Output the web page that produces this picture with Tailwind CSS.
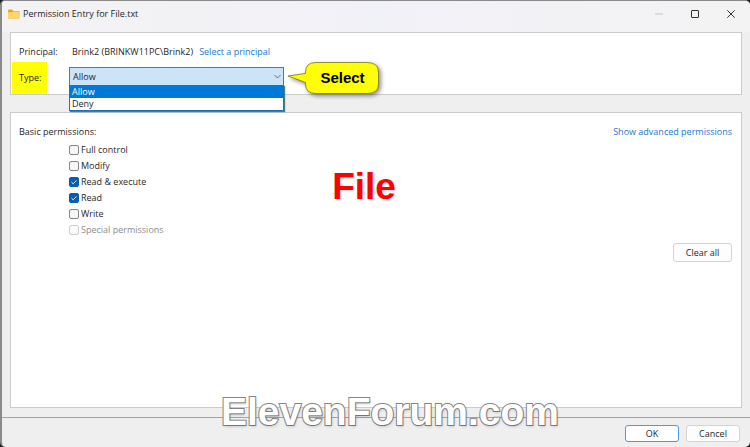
<!DOCTYPE html>
<html lang="en">
<head>
  <meta charset="UTF-8" />
  <meta name="viewport" content="width=device-width, initial-scale=1.0"/>
  <title>Permission Entry for File.txt</title>
  <script src="https://cdn.jsdelivr.net/npm/@tailwindcss/browser@4"></script>
</head>
<body class="bg-[#1c1c1c] h-screen overflow-hidden font-['Open_Sans','Noto_Sans',sans-serif] text-[9px] leading-3 text-[#1f1f1f]">

  <!-- Dialog window -->
  <div class="relative flex flex-col h-full bg-[#efefef] border-t border-l-2 border-[#8a8a8a] rounded-[5px] overflow-hidden">

    <!-- Title bar -->
    <header class="flex items-center h-[31px] pl-[6px] pr-px pb-[6px] shrink-0 bg-linear-to-r from-[#f3f3f3] via-[#f1f1f8] to-[#f3f3f3]">
      <svg class="w-3 h-3 mr-[3px]" viewBox="0 0 12 12">
        <path d="M0 2.5Q0 1.5 1 1.5H4L5.5 3H11Q12 3 12 4V9.500Q12 10.500 11 10.500H1Q0 10.500 0 9.500Z" fill="#e9a825"/>
        <path d="M0 5Q0 4.200 1 4.200H4.500L5.700 3.400H11Q12 3.400 12 4.400V9.500Q12 10.500 11 10.500H1Q0 10.500 0 9.500Z" fill="#fdd56b"/>
      </svg>
      <h1 class="flex-1">Permission Entry for File.txt</h1>
      <div class="flex">
        <button type="button" aria-label="Minimize" class="w-9 flex justify-center" disabled>
          <svg class="w-2 h-2" viewBox="0 0 8 8"><path d="M0 4H8" stroke="#c4c4c4" fill="none"/></svg>
        </button>
        <button type="button" aria-label="Maximize" class="w-9 flex justify-center">
          <svg class="w-2 h-2" viewBox="0 0 8 8"><rect x="0.500" y="0.500" width="7" height="7" rx="0.500" stroke="#333" fill="none"/></svg>
        </button>
        <button type="button" aria-label="Close" class="w-9 flex justify-center">
          <svg class="w-2 h-2" viewBox="0 0 8 8"><path d="M0.300 0.300L7.700 7.700M7.700 0.300L0.300 7.700" stroke="#333" fill="none"/></svg>
        </button>
      </div>
    </header>

    <main class="flex-1 flex flex-col gap-[17px] px-2 pb-[9px]">
      <!-- Principal and type -->
      <section class="bg-white border border-[#cbcbcb] pt-[13px]">
        <div class="flex pl-2 mb-1">
          <span class="w-[53px]">Principal:</span>
          <span class="mr-[6px]">Brink2 (BRINKW11PC\Brink2)</span>
          <a href="#" class="text-[#2277d4]">Select a principal</a>
        </div>
        <div class="flex pl-px">
          <label for="type" class="w-[35px] h-8 pl-[7px] flex items-center bg-[#ffff00]">Type:</label>
          <div class="relative ml-[22px] mt-[5px] w-[215px]">
            <select id="type" class="block w-full h-[19px] pl-[3px] appearance-none bg-[#cce4f7] border border-[#3c7fb8] outline-none">
              <option>Allow</option>
              <option>Deny</option>
            </select>
            <svg class="absolute right-[3px] top-[6px] w-[7px] h-[7px] pointer-events-none" viewBox="0 0 7 7"><path d="M0.500 2L3.500 5L6.500 2" stroke="#555" stroke-width="0.800" fill="none"/></svg>
            <ul role="listbox" class="absolute z-10 top-[18px] left-0 w-full bg-white border border-[#1b73bd] shadow-[1px_1px_1px_#4e7892]">
              <li role="option" aria-selected="true" class="px-0.5 bg-[#0078d7] text-white">Allow</li>
              <li role="option" aria-selected="false" class="px-0.5">Deny</li>
            </ul>
            <!-- Callout -->
            <div class="absolute left-[218px] -top-[6px] w-[94px] h-[34px] flex items-center justify-center pl-[17px] font-['Liberation_Sans',Arial,sans-serif] font-bold text-[15px] text-black">
              <svg class="absolute inset-0 w-full h-full overflow-visible drop-shadow-[2px_2px_2px_rgba(0,0,0,0.45)]" viewBox="0 0 94 34">
                <path d="M29 1.500H80Q91.500 1.500 91.500 11V23Q91.500 32.500 80 32.500H29Q18.500 32.500 18.500 23V21.500L1 15L18.500 12.500V11Q18.500 1.500 29 1.500Z" fill="#ffff00" stroke="#77771c" stroke-width="0.800"/>
              </svg>
              <span class="relative">Select</span>
            </div>
          </div>
        </div>
      </section>

      <!-- Basic permissions -->
      <section class="relative flex-1 bg-white border border-[#cbcbcb] pt-[13px] pl-2 pr-[9px]">
        <div class="flex justify-between">
          <h2>Basic permissions:</h2>
          <a href="#" class="text-[#2277d4]">Show advanced permissions</a>
        </div>
        <div class="flex flex-col gap-1 pl-[50px] pt-[6px]">
          <label class="flex items-center gap-[2px]"><input type="checkbox" class="appearance-none w-[10px] h-[10px] rounded-[2px] border border-[#858585] bg-[#f7f7f7]" /> Full control</label>
          <label class="flex items-center gap-[2px]"><input type="checkbox" class="appearance-none w-[10px] h-[10px] rounded-[2px] border border-[#858585] bg-[#f7f7f7]" /> Modify</label>
          <label class="relative flex items-center gap-[2px]">
            <input type="checkbox" checked class="appearance-none w-[10px] h-[10px] rounded-[2px] border border-[#858585] checked:bg-[#005fb8] checked:border-[#005fb8]" />
            <svg class="absolute left-0 w-[10px] h-[10px] pointer-events-none" viewBox="0 0 10 10"><path d="M2.500 5.200L4.200 6.800L7.500 3.500" stroke="#fff" stroke-width="0.900" fill="none"/></svg>
            Read &amp; execute
          </label>
          <label class="relative flex items-center gap-[2px]">
            <input type="checkbox" checked class="appearance-none w-[10px] h-[10px] rounded-[2px] border border-[#858585] checked:bg-[#005fb8] checked:border-[#005fb8]" />
            <svg class="absolute left-0 w-[10px] h-[10px] pointer-events-none" viewBox="0 0 10 10"><path d="M2.500 5.200L4.200 6.800L7.500 3.500" stroke="#fff" stroke-width="0.900" fill="none"/></svg>
            Read
          </label>
          <label class="flex items-center gap-[2px]"><input type="checkbox" class="appearance-none w-[10px] h-[10px] rounded-[2px] border border-[#858585] bg-[#f7f7f7]" /> Write</label>
          <label class="flex items-center gap-[2px] text-[#8d8d8d]"><input type="checkbox" disabled class="appearance-none w-[10px] h-[10px] rounded-[2px] border border-[#cfcfcf] bg-[#fbfbfb]" /> Special permissions</label>
        </div>
        <div class="flex justify-end pt-[7px]">
          <button type="button" class="w-[59px] h-[19px] bg-[#fdfdfd] border border-[#d3d3d3] rounded-[3px]">Clear all</button>
        </div>
        <p class="absolute top-[53px] inset-x-0 pr-6 text-center font-['Liberation_Sans',Arial,sans-serif] font-bold text-[37px] leading-[42px] text-[#ff0000] [text-shadow:1px_1px_3px_rgba(0,0,0,0.15)]">File</p>
      </section>
    </main>

    <!-- Footer -->
    <footer class="flex justify-end gap-[7px] h-[30px] pt-[7px] pr-[10px] border-t border-[#a3a3a3]">
      <button type="button" class="w-[54px] h-[17px] bg-white border border-[#4c9be0] rounded-[3px]">OK</button>
      <button type="button" class="w-[54px] h-[17px] bg-[#fdfdfd] border border-[#d3d3d3] rounded-[3px]">Cancel</button>
    </footer>

    <!-- Watermark -->
    <p class="absolute bottom-[13px] inset-x-0 pl-[28px] text-center font-['Liberation_Sans',Arial,sans-serif] font-bold text-[39px] leading-[44px] text-white [-webkit-text-stroke:2px_#858585] [paint-order:stroke_fill] [text-shadow:1px_2px_3px_rgba(0,0,0,0.15)] pointer-events-none">ElevenForum.com</p>
  </div>

</body>
</html>
